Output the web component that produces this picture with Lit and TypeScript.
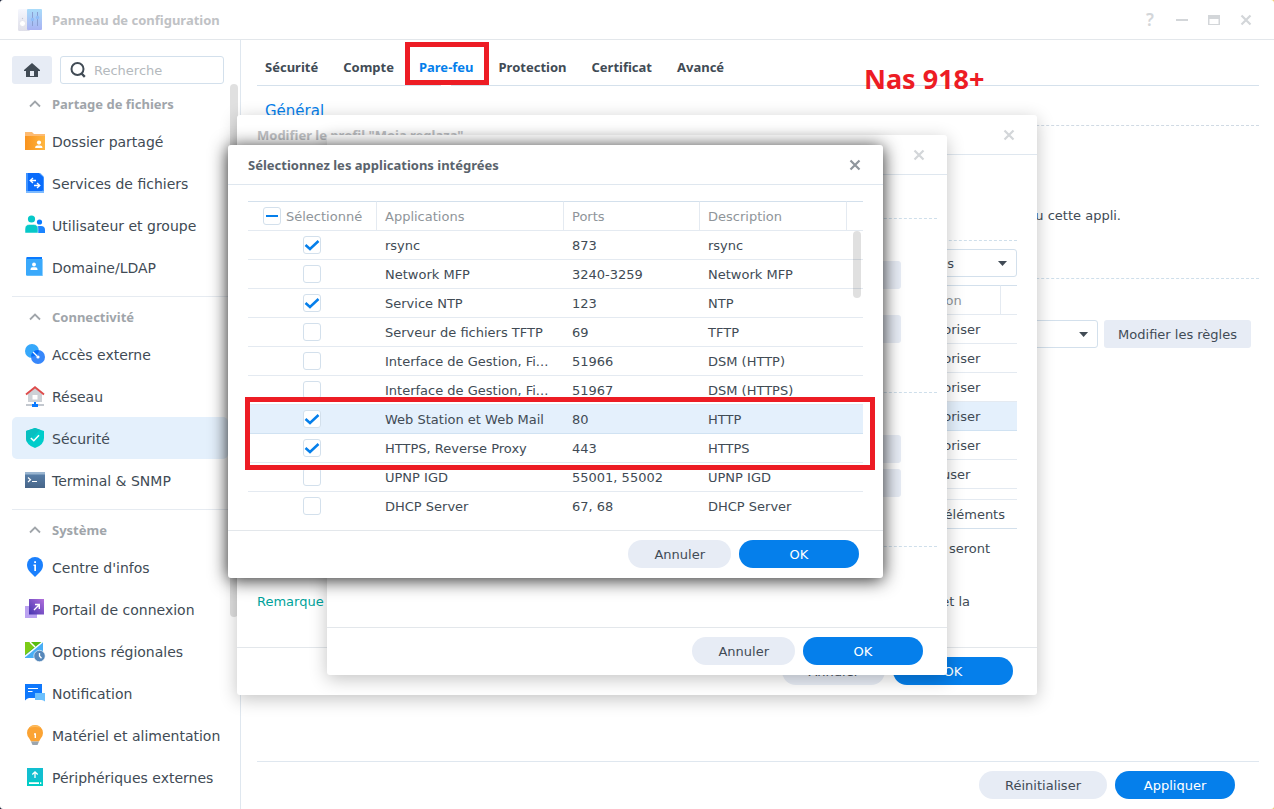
import { LitElement, html, css, svg, nothing, type TemplateResult } from "lit";
import { customElement, state } from "lit/decorators.js";
import { classMap } from "lit/directives/class-map.js";

interface NavItem {
  label: string;
  icon: TemplateResult;
}
interface NavGroup {
  title: string;
  items: NavItem[];
}
interface AppRow {
  app: string;
  ports: string;
  desc: string;
  on?: boolean;
  current?: boolean;
}

const icon = (body: TemplateResult) =>
  html`<svg class="icon" viewBox="0 0 20 20" width="20" height="20" aria-hidden="true">${body}</svg>`;

const icons = {
  folder: icon(svg`
    <path d="M0 1h7l2 2h11v4H0z" fill="#fdbb72"/>
    <defs><linearGradient id="fo"><stop stop-color="#f9931e"/><stop offset="1" stop-color="#ffb640"/></linearGradient></defs>
    <rect y="5" width="20" height="14" fill="url(#fo)"/>
    <circle cx="14" cy="11.6" r="2.1" fill="#fff"/><path d="M10.2 17v-.8q0-1.8 2-1.8h3.200q2 0 2 1.800v.8z" fill="#fff"/>`),
  files: icon(svg`
    <path d="M1 0h14l4 4v16H1z" fill="#3f93ff"/><path d="M3 0h12l3 3v13.500L17 18H3z" fill="#0a6cfb"/>
    <path d="M1 18h18v2H1z" fill="#7dbaff"/><path d="M14 0l5 4.500V3.500L15.500 0z" fill="#9cccff"/>
    <path d="M11 7.500H5.500M8 5L5.200 7.500 8 10M9 12.500h5.300M12 10l2.800 2.500L12 15" fill="none" stroke="#fff" stroke-width="1.300"/>`),
  users: icon(svg`
    <circle cx="14.500" cy="7" r="2.600" fill="#0a7aff"/><path d="M10 18v-3q0-4 4.500-4H16q4 0 4 4v3z" fill="#1b84ff"/>
    <circle cx="6.500" cy="4" r="3.600" fill="#06c8c8"/><path d="M0 18v-4q0-4.500 4.500-4.500H8.500q4.500 0 4.500 4.500v4z" fill="#06c8c8" stroke="#fff" stroke-width=".5"/>`),
  domain: icon(svg`
    <path d="M2 0h15v2H2q-1 0-1-1z" fill="#0a7aff"/><path d="M17 2h1v17H2v-1h15z" fill="#8fd0ff"/>
    <rect x="1" y="2" width="16" height="16.500" fill="#3aa9fb"/>
    <circle cx="9" cy="7.500" r="1.900" fill="#fff"/><path d="M5.500 13v-.7q0-2 2-2h3q2 0 2 2v.7z" fill="#fff"/>`),
  external: icon(svg`
    <circle cx="7" cy="7" r="7" fill="#36a8fb"/><circle cx="13" cy="13" r="7" fill="#3787fb"/>
    <path d="M13 6a7 7 0 0 0-7 6.500A7 7 0 0 0 14 7z" fill="#066df8"/>
    <path d="M8 8l4 4" stroke="#fff" stroke-width="1.200"/><circle cx="13" cy="13" r="1.600" fill="#fff"/>`),
  network: icon(svg`
    <path d="M3 8l7-6 7 6v8H3z" fill="#cdd1d6"/><rect x="7.500" y="9" width="5" height="4.500" fill="#fff"/>
    <path d="M1 8.500L10 1.200l9 7.300" fill="none" stroke="#dd4b4b" stroke-width="1.900"/>
    <path d="M1 19h18" stroke="#c3c8cf" stroke-width="2"/><path d="M9 16h2v2h2v3H7v-3h2z" fill="#0a7aff"/>`),
  shield: icon(svg`
    <path d="M10 0l9 3v7q0 7-9 10Q1 17 1 10V3z" fill="#00cdcb"/><path d="M10 0L1 3v7q0 2.500 1.200 4.500L15 1.700z" fill="#08bfc0"/>
    <path d="M5.800 10l3 2.800L14 7.200" fill="none" stroke="#fff" stroke-width="1.500"/>`),
  terminal: icon(svg`
    <defs><linearGradient id="te" x2="0" y2="1"><stop stop-color="#5a82ad"/><stop offset="1" stop-color="#476588"/></linearGradient></defs>
    <rect y="2" width="20" height="16" fill="url(#te)"/><rect y="2" width="20" height="2.500" fill="#9ab5d0"/>
    <path d="M3 7.500L5.500 9.700 3 12M7 11.500h5" fill="none" stroke="#fff" stroke-width="1.200"/>`),
  info: icon(svg`
    <path d="M10 0a8 8 0 0 1 8 8q0 4-3.500 7.500L10 20l-4.500-4.500Q2 12 2 8a8 8 0 0 1 8-8z" fill="#1a80fd"/>
    <path d="M9.200 4.200h1.800v1.800H9.200zM8.500 7.500H11V14H9.300V9H8.500z" fill="#fff"/>`),
  portal: icon(svg`
    <defs><linearGradient id="po" x1="1" x2="0" y2="1"><stop stop-color="#b370dc"/><stop offset="1" stop-color="#4433b0"/></linearGradient></defs>
    <rect y="7" width="12" height="12" fill="#bba2f1"/><rect x="4" width="15" height="15.500" fill="url(#po)"/>
    <path d="M9 11l5-5M10 5.500h4.300V10" fill="none" stroke="#fff" stroke-width="1.400"/>`),
  region: icon(svg`
    <path d="M0 1h18v16H0z" fill="#48aef5"/><path d="M0 1h17L0 14z" fill="#58bd10"/><path d="M0 1h5l4 5-9 8z" fill="#7ccb16"/>
    <path d="M0 15.500L17.500 1M5 1l5 5" fill="none" stroke="#fff" stroke-width="1.500"/>
    <circle cx="14.500" cy="15" r="5.700" fill="#5788ba" stroke="#fff" stroke-width=".6"/><path d="M14.500 12v3l2 2.300" fill="none" stroke="#fff" stroke-width="1.300"/>`),
  notify: icon(svg`
    <path d="M0 1h17v14H7l-3 0q-2 .2-4 2.500z" fill="#0f78fc"/><path d="M3 5.500h10M3 8.500h4.500" stroke="#fff" stroke-width="1.200"/>
    <path d="M10 10h10v8.500q-1.500-1.500-3.500-1.500H10z" fill="#6cc0fd"/>`),
  bulb: icon(svg`
    <path d="M10 0a8 8 0 0 1 8 8q0 3-2.300 5.400L14 16.500H6l-1.700-3.100Q2 11 2 8a8 8 0 0 1 8-8z" fill="#fba333"/>
    <path d="M4 3a8 8 0 0 1 12 0q-6-2-12 0z" fill="#fdbb5c"/><path d="M6 16.500h8L12.500 20h-5z" fill="#9ba5ae"/>
    <path d="M9 9h1.300v4" fill="none" stroke="#fff" stroke-width="1.400"/>`),
  drive: icon(svg`
    <rect x="2" y="1" width="16" height="13" fill="#12bfd0"/><rect x="2" y="13" width="16" height="6" fill="#02ccc6"/>
    <path d="M10 11V5M7.300 7.500L10 4.800l2.700 2.700" fill="none" stroke="#fff" stroke-width="1.300"/><path d="M4 16.200h10M15 16.200h1.300" stroke="#fff" stroke-width="1.700"/>`),
};

const groups: NavGroup[] = [
  {
    title: "Partage de fichiers",
    items: [
      { label: "Dossier partagé", icon: icons.folder },
      { label: "Services de fichiers", icon: icons.files },
      { label: "Utilisateur et groupe", icon: icons.users },
      { label: "Domaine/LDAP", icon: icons.domain },
    ],
  },
  {
    title: "Connectivité",
    items: [
      { label: "Accès externe", icon: icons.external },
      { label: "Réseau", icon: icons.network },
      { label: "Sécurité", icon: icons.shield },
      { label: "Terminal & SNMP", icon: icons.terminal },
    ],
  },
  {
    title: "Système",
    items: [
      { label: "Centre d'infos", icon: icons.info },
      { label: "Portail de connexion", icon: icons.portal },
      { label: "Options régionales", icon: icons.region },
      { label: "Notification", icon: icons.notify },
      { label: "Matériel et alimentation", icon: icons.bulb },
      { label: "Périphériques externes", icon: icons.drive },
    ],
  },
];

const tabs = ["Sécurité", "Compte", "Pare-feu", "Protection", "Certificat", "Avancé"];

const appRows: AppRow[] = [
  { app: "rsync", ports: "873", desc: "rsync", on: true },
  { app: "Network MFP", ports: "3240-3259", desc: "Network MFP" },
  { app: "Service NTP", ports: "123", desc: "NTP", on: true },
  { app: "Serveur de fichiers TFTP", ports: "69", desc: "TFTP" },
  { app: "Interface de Gestion, Fi...", ports: "51966", desc: "DSM (HTTP)" },
  { app: "Interface de Gestion, Fi...", ports: "51967", desc: "DSM (HTTPS)" },
  { app: "Web Station et Web Mail", ports: "80", desc: "HTTP", on: true, current: true },
  { app: "HTTPS, Reverse Proxy", ports: "443", desc: "HTTPS", on: true },
  { app: "UPNP IGD", ports: "55001, 55002", desc: "UPNP IGD" },
  { app: "DHCP Server", ports: "67, 68", desc: "DHCP Server" },
];

const actions = ["Autoriser", "Autoriser", "Autoriser", "Autoriser", "Autoriser", "Refuser"];

const cross = html`<svg viewBox="0 0 12 12" width="12" height="12" aria-hidden="true">
  <path d="M1.500 1.500l9 9M10.500 1.500l-9 9" stroke="currentColor" stroke-width="2.200" />
</svg>`;

@customElement("app-root")
export class AppRoot extends LitElement {
  @state() private section = "Sécurité";
  @state() private tab = "Pare-feu";

  static styles = css`
    :host {
      display: block;
      background: linear-gradient(90deg, #10182f 50%, #f3cf6a 50%);
      color: #414b55;
      font: 13px/20px "DejaVu Sans", Verdana, sans-serif;
    }
    * {
      box-sizing: border-box;
    }
    button,
    input,
    select {
      font: inherit;
      color: inherit;
      margin: 0;
    }
    button {
      border: 0;
      padding: 0;
      background: none;
      cursor: pointer;
    }
    h1,
    h2,
    h3,
    p,
    ul {
      margin: 0;
      padding: 0;
      font-weight: 400;
      list-style: none;
    }
    .window {
      position: relative;
      display: flex;
      flex-direction: column;
      min-height: 100vh;
      background: #fff;
      border-radius: 3px;
      overflow: hidden;
    }
    .titlebar {
      display: flex;
      align-items: center;
      height: 40px;
      padding: 0 12px 0 18px;
      border-bottom: 1px solid #e3e7eb;
      gap: 10px;
    }
    .title {
      flex: 1;
      font: 700 13px/20px "Noto Sans", sans-serif;
      color: #bfc2c5;
    }
    .tool {
      display: grid;
      place-items: center;
      width: 32px;
      height: 32px;
      color: #d3d6d9;
    }
    .tools {
      display: flex;
    }
    .help {
      font: 600 17px/20px "Noto Sans", sans-serif;
    }
    .columns {
      flex: 1;
      display: grid;
      grid-template-columns: 241px minmax(0, 1fr);
    }

    .side {
      position: relative;
      padding: 16px 12px 0;
      border-right: 1px solid #dfe7ef;
    }
    .finder {
      display: flex;
      gap: 8px;
      padding-right: 4px;
    }
    .home {
      flex: none;
      display: grid;
      place-items: center;
      width: 40px;
      height: 28px;
      border-radius: 3px;
      background: #e7ecf5;
    }
    .search {
      flex: 1;
      min-width: 0;
      display: flex;
      align-items: center;
      gap: 8px;
      height: 28px;
      padding: 0 9px;
      border: 1px solid #d3e0ec;
      border-radius: 3px;
    }
    .search svg {
      flex: none;
    }
    .search input {
      flex: 1;
      width: 0;
      min-width: 0;
      border: 0;
      padding: 2px 0 0;
      outline: 0;
      background: none;
    }
    .search input::placeholder {
      color: #b4b9bd;
      opacity: 1;
    }
    .group {
      padding: 4px 0 8px;
    }
    .group + .group {
      border-top: 1px solid #e6ebf1;
    }
    .groupname {
      display: flex;
      align-items: center;
      width: 100%;
      height: 32px;
      padding-left: 17px;
      gap: 11px;
      font: 700 13px/20px "Noto Sans", sans-serif;
      color: #a0a5aa;
    }
    .item {
      display: flex;
      align-items: center;
      height: 42px;
      padding-left: 13px;
      gap: 7px;
      border-radius: 5px;
      font-size: 14px;
      color: inherit;
      text-decoration: none;
      white-space: nowrap;
    }
    .item span {
      padding-top: 2px;
    }
    .item.current {
      background: #e4f0fc;
    }
    .icon {
      flex: none;
      overflow: visible;
    }
    .thumb {
      position: absolute;
      width: 8px;
      border-radius: 4px;
      background: rgba(0, 0, 0, 0.12);
    }
    .side .thumb {
      top: 44px;
      right: 2px;
      height: 533px;
    }

    .main {
      display: flex;
      flex-direction: column;
      padding: 0 15px 0 16px;
    }
    .tabs {
      display: flex;
      gap: 25px;
      height: 46px;
      padding: 8px 8px 0;
      border-bottom: 1px solid #d5e1ec;
    }
    .tab {
      position: relative;
      font: 700 13px/20px "Noto Sans", sans-serif;
    }
    .tab.current {
      color: #057feb;
    }
    .tab.current::after {
      content: "";
      position: absolute;
      left: calc(50% - 5px);
      bottom: -1px;
      width: 10px;
      height: 1px;
      background: #fff;
    }
    .content {
      flex: 1;
      padding-top: 15px;
    }
    .section {
      padding: 0 8px 4px;
      border-bottom: 1px dashed #d0dae4;
      font-size: 15px;
      line-height: 20px;
      color: #057feb;
    }
    .hint {
      padding: 80px 138px 52px 0;
      text-align: right;
    }
    .rule {
      border: 0;
      margin: 0;
      border-top: 1px dashed #cfdfeb;
    }
    .profile {
      display: flex;
      justify-content: flex-end;
      gap: 6px;
      padding: 41px 8px 0 0;
    }
    .drop {
      position: relative;
      display: block;
      width: 200px;
    }
    .drop::after {
      content: "";
      position: absolute;
      right: 10px;
      top: 12px;
      width: 9px;
      height: 5px;
      background: #414b55;
      clip-path: polygon(0 0, 100% 0, 50% 100%);
      pointer-events: none;
    }
    .drop select {
      appearance: none;
      display: block;
      width: 100%;
      height: 28px;
      padding: 2px 62px 0 8px;
      border: 1px solid #d3e0ec;
      border-radius: 3px;
      background: #fff;
      text-align-last: right;
    }
    .flat {
      height: 28px;
      padding: 2px 14px 0;
      border-radius: 3px;
      background: #e7ecf5;
    }
    .foot {
      display: flex;
      justify-content: flex-end;
      gap: 8px;
      height: 48px;
      padding: 9px 24px 0;
      border-top: 1px solid #dfe7ef;
    }
    .pill {
      height: 28px;
      padding: 2px 26px 0;
      border-radius: 14px;
      background: #e7ecf5;
    }
    .pill.primary {
      width: 120px;
      padding: 2px 0 0;
      background: #057feb;
      color: #fff;
    }

    .dialog {
      position: absolute;
      border-radius: 3px;
      background: #fff;
      box-shadow: 0 4px 18px rgba(0, 0, 0, 0.24);
    }
    .dialog .foot {
      border-top-color: #e3e7eb;
    }
    .dialog.profiles {
      left: 237px;
      top: 115px;
      width: 800px;
    }
    .dialog.rule-editor {
      left: 327px;
      top: 135px;
      width: 620px;
    }
    .dialog.apps {
      left: 228px;
      top: 145px;
      width: 655px;
      box-shadow: 0 2px 18px rgba(0, 0, 0, 0.85);
    }
    .dialog header {
      display: flex;
      align-items: center;
      height: 40px;
      padding: 0 12px 0 20px;
      border-bottom: 1px solid #dfe7ef;
    }
    .apps .title {
      color: #5a636c;
    }
    .apps .tool {
      color: #8f969d;
    }

    .profiles .body {
      padding: 85px 20px 35px;
    }
    .profiles .drop {
      width: 160px;
      margin: 8px 0 8px auto;
    }
    .count {
      height: 30px;
      margin-top: 10px;
      padding: 5px 12px 0;
      border-top: 1px solid #e4eaf1;
      border-bottom: 1px solid #d3e0ec;
      text-align: right;
    }
    .seront {
      padding: 10px 27px 33px 0;
      text-align: right;
    }
    .note {
      display: flex;
      justify-content: space-between;
      padding-right: 47px;
    }
    .note strong {
      font-weight: 400;
      color: #00a39b;
    }

    .rule-editor .body {
      display: grid;
      justify-items: end;
      padding: 43px 10px 80px;
    }
    .rule-editor .rule {
      width: 100%;
    }
    .block {
      display: grid;
      padding: 42px 36px 49px 0;
      gap: 26px;
    }
    .block.tight {
      gap: 6px;
    }
    .block .flat {
      padding: 2px 24px 0;
    }

    table {
      width: 100%;
      table-layout: fixed;
      border-collapse: separate;
      border-spacing: 0;
    }
    th,
    td {
      height: 29px;
      padding: 2px 8px 0;
      border-bottom: 1px solid #e4eaf1;
      font-weight: 400;
      text-align: left;
      white-space: nowrap;
      overflow: hidden;
      text-overflow: ellipsis;
    }
    th {
      height: 30px;
      border-top: 1px solid #d3e0ec;
      border-right: 1px solid #e4eaf1;
      color: #8f959a;
    }
    th:last-child {
      border-right: 0;
    }
    tr.current td {
      background: #e4f0fc;
      border-bottom-color: #d0e2f2;
    }
    .apps .body {
      position: relative;
      padding: 16px 20px 9px;
    }
    .apps tbody tr:last-child td {
      border-bottom-color: transparent;
    }
    .c-check {
      width: 129px;
    }
    .c-app {
      width: 187px;
    }
    .c-port {
      width: 136px;
    }
    .c-bar {
      width: 16px;
    }
    .c-action {
      width: 88px;
    }
    .pick {
      padding: 0 0 0 55px;
    }
    th.pickall {
      padding: 0 0 0 15px;
    }
    .all {
      display: flex;
      align-items: center;
      gap: 5px;
    }
    .all span {
      padding-top: 2px;
    }
    .box {
      appearance: none;
      display: block;
      flex: none;
      width: 18px;
      height: 18px;
      border: 1px solid #d3e0ec;
      border-radius: 3px;
      background: #fff center / 16px 16px no-repeat;
    }
    .box:checked {
      background-image: url("data:image/svg+xml,%3Csvg xmlns='http://www.w3.org/2000/svg' viewBox='0 0 16 16'%3E%3Cpath d='M1.500 8l4.500 4 8.500-8' fill='none' stroke='%23057feb' stroke-width='2.500'/%3E%3C/svg%3E");
    }
    .box:indeterminate {
      background-image: url("data:image/svg+xml,%3Csvg xmlns='http://www.w3.org/2000/svg' viewBox='0 0 16 16'%3E%3Cpath d='M2 8h12' stroke='%23057feb' stroke-width='2'/%3E%3C/svg%3E");
    }
    .apps .thumb {
      top: 46px;
      right: 22px;
      height: 67px;
    }

    .mark {
      position: absolute;
      border: 5px solid #ed1c24;
      pointer-events: none;
    }
    .mark.tabmark {
      left: 405px;
      top: 42px;
      width: 84px;
      height: 43px;
    }
    .mark.rowmark {
      left: 245px;
      top: 397px;
      width: 630px;
      height: 73px;
    }
    .nas {
      position: absolute;
      left: 864px;
      top: 61px;
      font: 700 27px/36px "Noto Sans", sans-serif;
      color: #ed1c24;
    }
  `;

  private foot(cancel: string, ok: string) {
    return html`<div class="foot">
      <button class="pill">${cancel}</button>
      <button class="pill primary">${ok}</button>
    </div>`;
  }

  private head(title: string) {
    return html`<header>
      <h2 class="title">${title}</h2>
      <button class="tool" aria-label="Fermer">${cross}</button>
    </header>`;
  }

  private sidebar() {
    return html`<nav class="side">
      <div class="finder">
        <button class="home" aria-label="Accueil">
          <svg width="16" height="14" viewBox="0 0 16 14" aria-hidden="true">
            <path d="M8 0l8 7v1h-2v6H2V8H0V7z" fill="#414b55" /><rect x="6" y="8" width="4" height="5" fill="#e7ecf5" />
          </svg>
        </button>
        <label class="search">
          <svg width="16" height="16" viewBox="0 0 16 16" aria-hidden="true">
            <circle cx="7.500" cy="7" r="6" fill="none" stroke="#414b55" stroke-width="2" />
            <path d="M11.500 11.500l3.300 3.300" stroke="#414b55" stroke-width="2.400" />
          </svg>
          <input type="search" placeholder="Recherche" aria-label="Recherche" />
        </label>
      </div>
      ${groups.map(
        (g) => html`<section class="group">
          <button class="groupname" aria-expanded="true">
            <svg width="12" height="8" viewBox="0 0 12 8" aria-hidden="true">
              <path d="M1 6.500l5-5 5 5" fill="none" stroke="#a0a5aa" stroke-width="1.800" />
            </svg>
            ${g.title}
          </button>
          ${g.items.map(
            (i) => html`<a
              href="#"
              class=${classMap({ item: true, current: i.label === this.section })}
              @click=${(e: Event) => {
                e.preventDefault();
                this.section = i.label;
              }}
              >${i.icon}<span>${i.label}</span></a
            >`,
          )}
        </section>`,
      )}
      <div class="thumb"></div>
    </nav>`;
  }

  private main() {
    return html`<main class="main">
      <div class="tabs" role="tablist">
        ${tabs.map(
          (t) => html`<button
            role="tab"
            aria-selected=${t === this.tab}
            class=${classMap({ tab: true, current: t === this.tab })}
            @click=${() => (this.tab = t)}
          >
            ${t}
          </button>`,
        )}
      </div>
      <div class="content">
        <h2 class="section">Général</h2>
        <p class="hint">ou cette appli.</p>
        <hr class="rule" />
        <div class="profile">
          <label class="drop"><select aria-label="Profil de pare-feu"><option></option></select></label>
          <button class="flat">Modifier les règles</button>
        </div>
      </div>
      ${this.foot("Réinitialiser", "Appliquer")}
    </main>`;
  }

  private profiles() {
    return html`<section class="dialog profiles" role="dialog">
      ${this.head('Modifier le profil "Moja reglaza"')}
      <div class="body">
        <hr class="rule" />
        <label class="drop"><select aria-label="Interface"><option>Toutes</option></select></label>
        <table>
          <colgroup><col /><col class="c-action" /><col class="c-bar" /></colgroup>
          <thead><tr><th></th><th>Action</th><th></th></tr></thead>
          <tbody>
            ${actions.map(
              (a, i) => html`<tr class=${i === 3 ? "current" : nothing}><td></td><td>${a}</td><td></td></tr>`,
            )}
          </tbody>
        </table>
        <p class="count">6 éléments</p>
        <p class="seront">seront</p>
        <p class="note"><strong>Remarque</strong><span>et la</span></p>
      </div>
      ${this.foot("Annuler", "OK")}
    </section>`;
  }

  private ruleEditor() {
    return html`<section class="dialog rule-editor" role="dialog">
      ${this.head("")}
      <div class="body">
        <hr class="rule" />
        <div class="block"><button class="flat">Sélectionner</button><button class="flat">Sélectionner</button></div>
        <hr class="rule" />
        <div class="block tight"><button class="flat">Sélectionner</button><button class="flat">Sélectionner</button></div>
        <hr class="rule" />
      </div>
      ${this.foot("Annuler", "OK")}
    </section>`;
  }

  private apps() {
    return html`<section class="dialog apps" role="dialog">
      ${this.head("Sélectionnez les applications intégrées")}
      <div class="body">
        <table>
          <colgroup><col class="c-check" /><col class="c-app" /><col class="c-port" /><col /><col class="c-bar" /></colgroup>
          <thead>
            <tr>
              <th class="pickall">
                <label class="all"><input class="box" type="checkbox" .indeterminate=${true} /><span>Sélectionné</span></label>
              </th>
              <th>Applications</th>
              <th>Ports</th>
              <th>Description</th>
              <th></th>
            </tr>
          </thead>
          <tbody>
            ${appRows.map(
              (r) => html`<tr class=${r.current ? "current" : nothing}>
                <td class="pick"><input class="box" type="checkbox" aria-label=${r.app} .checked=${!!r.on} /></td>
                <td>${r.app}</td>
                <td>${r.ports}</td>
                <td>${r.desc}</td>
                <td></td>
              </tr>`,
            )}
          </tbody>
        </table>
        <div class="thumb"></div>
      </div>
      ${this.foot("Annuler", "OK")}
    </section>`;
  }

  render() {
    return html`<div class="window">
      <div class="titlebar">
        <svg width="24" height="22" viewBox="0 0 24 22" aria-hidden="true">
          <defs>
            <linearGradient id="cp" x2="0" y2="1"><stop stop-color="#a9dcfa" /><stop offset="1" stop-color="#a9b3f3" /></linearGradient>
            <linearGradient id="cw" x2="0" y2="1"><stop stop-color="#f5f7fe" /><stop offset="1" stop-color="#dfdfe9" /></linearGradient>
          </defs>
          <rect width="12" height="22" rx="1.500" fill="url(#cw)" /><rect x="9" width="15" height="21" rx="1" fill="url(#cp)" />
          <circle cx="4.500" cy="14.500" r="3" fill="#fff" stroke="#d8dae6" stroke-width=".6" /><circle cx="4.500" cy="9.500" r=".7" fill="#c5c8d6" />
          <path d="M14.500 3v14M19.500 3v14" stroke="#8b9fd2" stroke-width="1" />
          <circle cx="14.500" cy="10.500" r="1.700" fill="#8fbdf8" /><circle cx="19.500" cy="8.500" r="1.700" fill="#8fbdf8" />
        </svg>
        <h1 class="title">Panneau de configuration</h1>
        <div class="tools">
          <button class="tool help" aria-label="Aide">?</button>
          <button class="tool" aria-label="Réduire">
            <svg width="12" height="12" viewBox="0 0 12 12"><rect y="5" width="12" height="2" fill="currentColor" /></svg>
          </button>
          <button class="tool" aria-label="Agrandir">
            <svg width="12" height="10" viewBox="0 0 12 10"><path fill-rule="evenodd" d="M0 0h12v10H0zM1.500 4v5h9V4z" fill="currentColor" /></svg>
          </button>
          <button class="tool" aria-label="Fermer">${cross}</button>
        </div>
      </div>
      <div class="columns">${this.sidebar()}${this.main()}</div>
      ${this.profiles()} ${this.ruleEditor()} ${this.apps()}
      <div class="mark tabmark"></div>
      <div class="mark rowmark"></div>
      <p class="nas">Nas 918+</p>
    </div>`;
  }
}
